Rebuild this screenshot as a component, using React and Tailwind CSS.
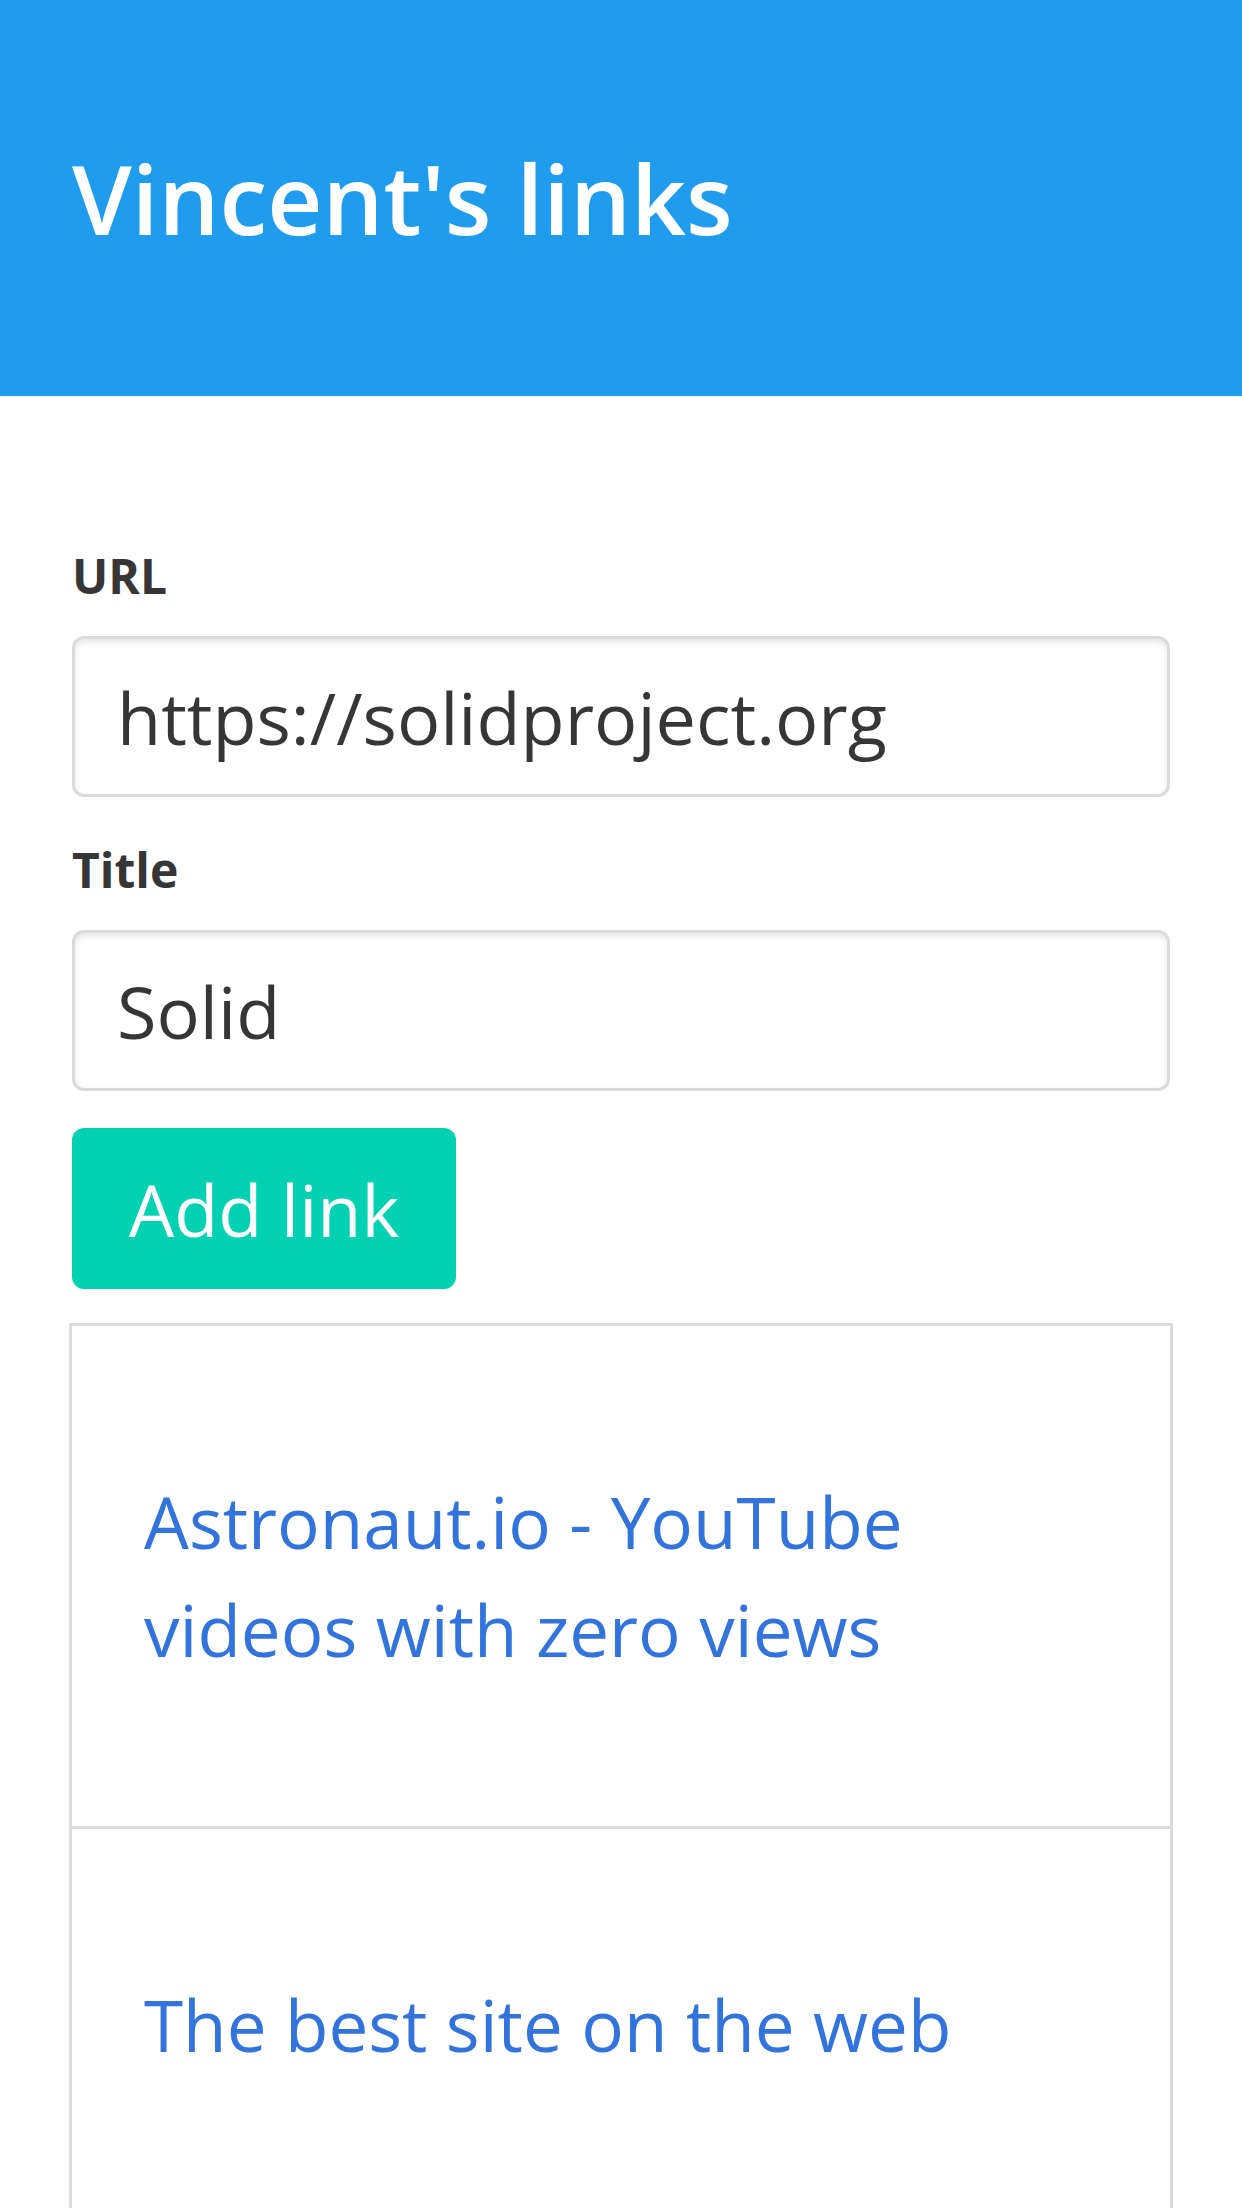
import React, { useState } from "react";

const links = [
  { title: "Astronaut.io - YouTube videos with zero views", url: "https://astronaut.io" },
  { title: "The best site on the web", url: "https://example.com" },
];

const Field = ({ label, value, onChange }) => (
  <div className="mb-[37px]">
    <label className="block text-[48px] leading-[72px] font-bold text-[#363636] mb-[24px]">
      {label}
    </label>
    <input
      value={value}
      onChange={(e) => onChange(e.target.value)}
      className="w-full h-[161px] border-[3px] border-[#dbdbdb] rounded-[12px] pl-[42px] pr-[42px] text-[72px] text-[#363636] bg-white shadow-[inset_0_3px_6px_rgba(10,10,10,0.1)] outline-none"
    />
  </div>
);

const App = () => {
  const [url, setUrl] = useState("https://solidproject.org");
  const [title, setTitle] = useState("Solid");

  return (
    <div className="min-h-[2208px] bg-white font-['Open_Sans',sans-serif]">
      <header className="bg-[#209cee] px-[72px] py-[144px]">
        <h1 className="text-[96px] leading-[108px] font-semibold text-white">
          Vincent's links
        </h1>
      </header>

      <section className="px-[72px] py-[144px]">
        <Field label="URL" value={url} onChange={setUrl} />
        <Field label="Title" value={title} onChange={setTitle} />
        <div className="mb-[34px]">
          <button className="h-[161px] w-[384px] bg-[#00d1b2] rounded-[12px] text-white text-[72px] leading-none">
            Add link
          </button>
        </div>

        <div className="-mx-[3px] border-[3px] border-[#dbdbdb]">
          {links.map((link, i) => (
            <div
              key={i}
              className={
                "px-[72px] py-[142px] " + (i > 0 ? "border-t-[3px] border-[#dbdbdb]" : "")
              }
            >
              <a href={link.url} className="text-[71px] leading-[108px] text-[#3273dc]">
                {link.title}
              </a>
            </div>
          ))}
        </div>
      </section>
    </div>
  );
};

export default App;
